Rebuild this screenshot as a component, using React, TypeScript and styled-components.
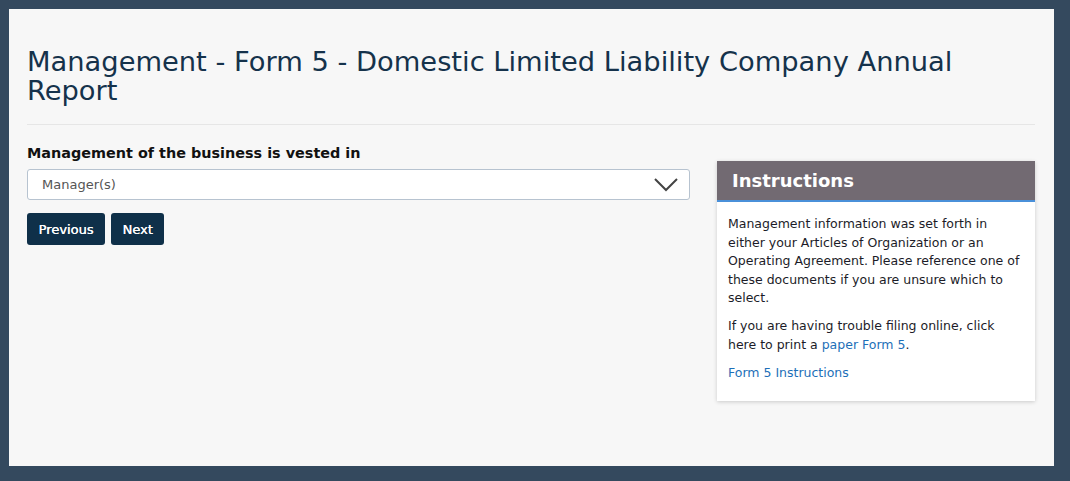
import React from 'react'
import styled, { createGlobalStyle } from 'styled-components'

const GlobalStyle = createGlobalStyle`
  html, body {
    margin: 0;
    padding: 0;
    background: #34495e;
    font-family: 'DejaVu Sans', Verdana, sans-serif;
  }
`

const Frame = styled.div`
  width: 1070px;
  height: 481px;
  box-sizing: border-box;
  padding: 9px 16px 15px 9px;
  background: #34495e;
`

const Page = styled.main`
  height: 100%;
  box-sizing: border-box;
  background: #f7f7f7;
  padding: 38px 19px 0 18px;
`

const Title = styled.h1`
  margin: 0;
  font-size: 27.3px;
  line-height: 29px;
  font-weight: normal;
  color: #15324b;
  padding-bottom: 19px;
  border-bottom: 1px solid #e6e6e6;
`

const Columns = styled.div`
  display: grid;
  grid-template-columns: 663px 318px;
  column-gap: 27px;
  align-items: start;
  margin-top: 19px;
`

const Label = styled.label`
  display: block;
  font-size: 14.4px;
  line-height: 18px;
  font-weight: bold;
  color: #111;
  margin-bottom: 7px;
`

const SelectBox = styled.div`
  height: 31px;
  box-sizing: border-box;
  border: 1px solid #b7c3d0;
  border-radius: 3px;
  background: #fff;
  display: flex;
  align-items: center;
  justify-content: space-between;
  padding: 0 11px 0 14px;
  font-size: 13px;
  color: #555;
`

const Buttons = styled.div`
  display: flex;
  gap: 6px;
  margin-top: 13px;
`

const Button = styled.button`
  height: 32px;
  padding: 0 11.5px;
  border: none;
  border-radius: 3px;
  background: #0f3049;
  color: #fff;
  font-family: inherit;
  font-size: 13px;
  font-weight: normal;
  text-shadow: 0.3px 0 0 #fff;
`

const Card = styled.aside`
  background: #fff;
  box-shadow: 0 1px 4px rgba(0, 0, 0, 0.18);
  margin-top: 17px;
`

const CardHeader = styled.h2`
  margin: 0;
  height: 41px;
  box-sizing: border-box;
  background: #726a72;
  border-bottom: 2px solid #4a90d9;
  color: #fff;
  font-size: 18px;
  font-weight: bold;
  padding: 0 15px;
  display: flex;
  align-items: center;
`

const CardBody = styled.div`
  padding: 13px 11px 19px;
  font-size: 12.5px;
  line-height: 18.5px;
  color: #1c1c28;

  p {
    margin: 0 0 9.5px;
  }

  p:last-child {
    margin-bottom: 0;
  }

  a {
    color: #1d6fb8;
    text-decoration: none;
  }
`

const Chevron = () => (
  <svg width="24" height="14" viewBox="0 0 24 14">
    <polyline points="1,1 12,12 23,1" fill="none" stroke="#444" strokeWidth="2" />
  </svg>
)

export default function App() {
  return (
    <Frame>
      <GlobalStyle />
      <Page>
        <Title>Management - Form 5 - Domestic Limited Liability Company Annual Report</Title>
        <Columns>
          <div>
            <Label>Management of the business is vested in</Label>
            <SelectBox>
              <span>Manager(s)</span>
              <Chevron />
            </SelectBox>
            <Buttons>
              <Button>Previous</Button>
              <Button>Next</Button>
            </Buttons>
          </div>
          <Card>
            <CardHeader>Instructions</CardHeader>
            <CardBody>
              <p>
                Management information was set forth in either your Articles of Organization or an
                Operating Agreement. Please reference one of these documents if you are unsure which
                to select.
              </p>
              <p>
                If you are having trouble filing online, click here to print a{' '}
                <a href="#">paper Form 5</a>.
              </p>
              <p>
                <a href="#">Form 5 Instructions</a>
              </p>
            </CardBody>
          </Card>
        </Columns>
      </Page>
    </Frame>
  )
}
